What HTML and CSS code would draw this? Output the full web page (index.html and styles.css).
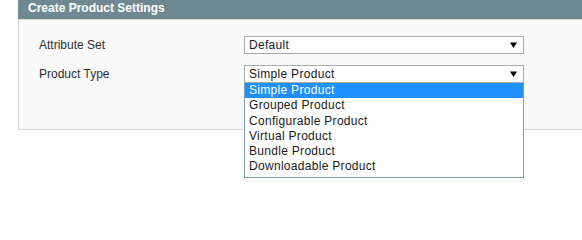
FILE: index.html
```html
<!DOCTYPE html>
<html lang="en">
<head>
<meta charset="utf-8">
<title>Create Product Settings</title>
<link rel="stylesheet" href="styles.css">
</head>
<body>
<div class="fieldset">
  <div class="fieldset-head"><h4>Create Product Settings</h4></div>
  <div class="fieldset-body">
    <div class="row">
      <label class="row-label">Attribute Set</label>
      <div class="select-wrap">
        <div class="select"><span>Default</span><svg class="arrow" width="7" height="6" viewBox="0 0 7 6"><polygon points="0,0.5 7,0.5 3.5,6" fill="#000"/></svg></div>
      </div>
    </div>
    <div class="row">
      <label class="row-label">Product Type</label>
      <div class="select-wrap">
        <div class="select"><span>Simple Product</span><svg class="arrow" width="7" height="6" viewBox="0 0 7 6"><polygon points="0,0.5 7,0.5 3.5,6" fill="#000"/></svg></div>
        <ul class="dropdown">
          <li class="option selected">Simple Product</li>
          <li class="option">Grouped Product</li>
          <li class="option">Configurable Product</li>
          <li class="option">Virtual Product</li>
          <li class="option">Bundle Product</li>
          <li class="option">Downloadable Product</li>
        </ul>
      </div>
    </div>
  </div>
</div>
</body>
</html>
```

FILE: styles.css
```css
html, body {
  margin: 0;
  padding: 0;
  background: #ffffff;
  overflow: hidden;
}

body {
  width: 582px;
  height: 228px;
  font-family: "Liberation Sans", Arial, sans-serif;
  font-size: 12px;
  color: #2f2f2f;
}

.fieldset {
  margin-left: 18px;
}

.fieldset-head {
  height: 19px;
  background: #6f8992;
  padding-left: 10px;
}

.fieldset-head h4 {
  margin: 0;
  font-size: 12px;
  font-weight: bold;
  line-height: 16px;
  color: #ffffff;
}

.fieldset-body {
  background: #fafafa;
  border: 1px solid #d6d6d6;
  border-right: 0;
  padding: 16px 0 46px 20px;
  display: flex;
  flex-direction: column;
  gap: 11px;
}

.row {
  display: grid;
  grid-template-columns: 205px 280px;
  align-items: center;
  height: 18px;
}

.row-label {
  line-height: 18px;
  color: #2f2f2f;
}

.select-wrap {
  position: relative;
  width: 280px;
}

.select {
  box-sizing: border-box;
  height: 18px;
  border: 1px solid #aaaaaa;
  background: #ffffff;
  padding-left: 4px;
  line-height: 16px;
  color: #1a1a1a;
  letter-spacing: 0.3px;
  display: flex;
  align-items: center;
  justify-content: space-between;
}

.arrow {
  margin-right: 6px;
  display: block;
}

.dropdown {
  position: absolute;
  top: 18px;
  left: 0;
  box-sizing: border-box;
  width: 280px;
  margin: 0;
  padding: 0 0 2.5px 0;
  list-style: none;
  background: #ffffff;
  border: 1px solid #7f9db9;
  border-top: 0;
  z-index: 2;
}

.option {
  height: 15.25px;
  line-height: 15.25px;
  padding-left: 4px;
  color: #1a1a1a;
  letter-spacing: 0.3px;
  white-space: nowrap;
}

.option.selected {
  background: #1e90ff;
  color: #ffffff;
}
```
